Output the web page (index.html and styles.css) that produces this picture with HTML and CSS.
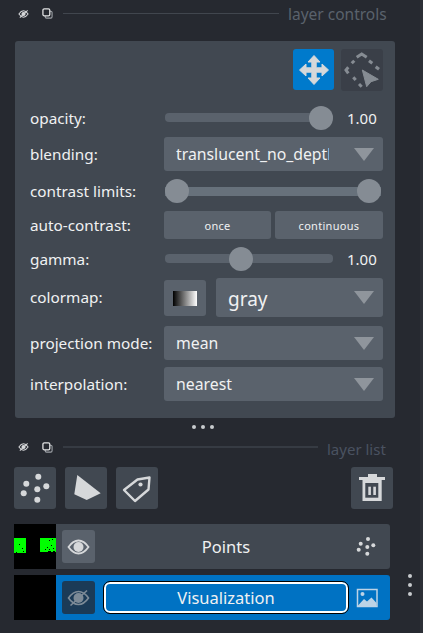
FILE: index.html
```html
<!DOCTYPE html>
<html lang="en">
<head>
<meta charset="utf-8">
<title>layer controls</title>
<link rel="stylesheet" href="styles.css">
</head>
<body>
<svg class="defs" width="0" height="0" aria-hidden="true">
  <defs>
    <symbol id="mini-eye" viewBox="0 0 12 10">
      <path d="M1 5C3 2 4.500 1.500 6 1.500S9 2 11 5C9 8 7.500 8.500 6 8.500S3 8 1 5Z" fill="none" stroke="#d6d8da" stroke-width="1.100"/>
      <circle cx="6" cy="5" r="2.300" fill="#d6d8da"/>
      <path d="M2 9 10.500 1" stroke="#d6d8da" stroke-width="1.100"/>
    </symbol>
    <symbol id="mini-copy" viewBox="0 0 12 12">
      <rect x="3.500" y="3.500" width="7.500" height="7.500" rx="1.500" fill="none" stroke="#9da1a6" stroke-width="1.200"/>
      <rect x="1" y="1" width="7.500" height="7.500" rx="1.500" fill="#262930" stroke="#e2e3e4" stroke-width="1.400"/>
    </symbol>
    <symbol id="arrow" viewBox="0 0 20 13"><path d="M0 0H20L10 13Z" fill="#8f959c"/></symbol>
  </defs>
</svg>
<main class="app">
  <header class="section-head">
    <svg class="mini-eye"><use href="#mini-eye"/></svg>
    <svg class="mini-copy"><use href="#mini-copy"/></svg>
    <span class="rule"></span>
    <span class="section-title">layer controls</span>
  </header>

  <section class="panel">
    <div class="modes">
      <button class="mode mode-on" type="button">
        <svg width="32" height="32" viewBox="0 0 32 32"><path d="M16 1.500 22 8H18.200V13.800H24V10L30.500 16 24 22V18.200H18.200V24H22L16 30.500 10 24H13.800V18.200H8V22L1.500 16 8 10V13.800H13.800V8H10Z" fill="#d6d8da" stroke="#d6d8da" stroke-width="1" stroke-linejoin="round"/></svg>
      </button>
      <button class="mode mode-off" type="button">
        <svg width="42" height="42" viewBox="0 0 42 42">
          <g fill="none" stroke="#868c93" stroke-width="3">
            <path d="M15.700 8.300 20.700 5 25.700 8.300"/>
            <path d="M10.700 14.300 13.300 11.700"/>
            <path d="M7.300 18.300 5 21 7.300 24.300"/>
            <path d="M12.300 28.300 14.700 31"/>
            <path d="M18 35 20.700 37.700"/>
            <path d="M28 11.700 31.300 14.300"/>
            <path d="M34.700 17.700 38 20.300"/>
          </g>
          <path d="M21.300 21 37.300 30.300 30 32.700 25.700 37.700Z" fill="#868c93" stroke="#868c93" stroke-width="1" stroke-linejoin="round"/>
        </svg>
      </button>
    </div>

    <div class="row row-slider">
      <label class="label">opacity:</label>
      <div class="slider"><div class="track"><span class="knob" style="left:156px"></span></div><span class="value">1.00</span></div>
    </div>
    <div class="row">
      <label class="label">blending:</label>
      <div class="select"><span class="select-text">translucent_no_depth</span><svg class="arrow"><use href="#arrow"/></svg></div>
    </div>
    <div class="row row-range">
      <label class="label">contrast limits:</label>
      <div class="track track-range"><span class="knob" style="left:12px"></span><span class="knob" style="left:204px"></span></div>
    </div>
    <div class="row row-auto">
      <label class="label">auto-contrast:</label>
      <div class="pair"><button class="small-btn" type="button">once</button><button class="small-btn" type="button">continuous</button></div>
    </div>
    <div class="row row-slider">
      <label class="label">gamma:</label>
      <div class="slider"><div class="track"><span class="knob" style="left:76px"></span></div><span class="value">1.00</span></div>
    </div>
    <div class="row row-cmap">
      <label class="label">colormap:</label>
      <div class="cmap">
        <span class="swatch-box"><span class="swatch"></span></span>
        <div class="select select-cmap"><span class="select-text cmap-text">gray</span><svg class="arrow"><use href="#arrow"/></svg></div>
      </div>
    </div>
    <div class="row row-proj">
      <label class="label">projection mode:</label>
      <div class="select"><span class="select-text">mean</span><svg class="arrow"><use href="#arrow"/></svg></div>
    </div>
    <div class="row">
      <label class="label">interpolation:</label>
      <div class="select"><span class="select-text">nearest</span><svg class="arrow"><use href="#arrow"/></svg></div>
    </div>
  </section>

  <div class="splitter"><span></span><span></span><span></span></div>

  <header class="section-head section-head-list">
    <svg class="mini-eye"><use href="#mini-eye"/></svg>
    <svg class="mini-copy"><use href="#mini-copy"/></svg>
    <span class="rule rule-list"></span>
    <span class="section-title section-title-list">layer list</span>
  </header>

  <div class="tools">
    <button class="tool" type="button">
      <svg width="42" height="42" viewBox="0 0 42 42" fill="#d6d8da"><circle cx="24.300" cy="9.700" r="3"/><circle cx="12.300" cy="16.700" r="3"/><circle cx="32.300" cy="19.300" r="3"/><circle cx="23.300" cy="22.300" r="3"/><circle cx="9.700" cy="26.300" r="3"/><circle cx="23.300" cy="32.700" r="3"/></svg>
    </button>
    <button class="tool" type="button">
      <svg width="42" height="42" viewBox="0 0 42 42"><path d="M12.300 8 35.700 26.300 21.700 33 9.300 27.300Z" fill="#d6d8da"/></svg>
    </button>
    <button class="tool" type="button">
      <svg width="42" height="42" viewBox="0 0 42 42"><path d="M8 23 21.500 12.500 33.500 10.500 32.500 22.500 19 34Z" fill="none" stroke="#d6d8da" stroke-width="2.400" stroke-linejoin="round"/><circle cx="24.500" cy="17.500" r="2.100" fill="#d6d8da"/></svg>
    </button>
    <button class="tool tool-trash" type="button">
      <svg width="42" height="42" viewBox="0 0 42 42"><path d="M17 7H26V10H34V13H8V10H17Z" fill="#d6d8da"/><path d="M11.500 13H30.700V34H11.500Z" fill="#d6d8da"/><rect x="14.300" y="16" width="13" height="14.700" fill="#414851"/><rect x="17.300" y="19.700" width="2.600" height="8.300" fill="#d6d8da"/><rect x="22.300" y="19.700" width="2.600" height="8.300" fill="#d6d8da"/></svg>
    </button>
  </div>

  <div class="layers-wrap">
    <ul class="layers">
      <li class="layer">
        <svg class="thumb" width="42" height="45" viewBox="0 0 42 45">
          <rect width="42" height="45" fill="#000"/>
          <rect x="0" y="14" width="12" height="15" fill="#00ff00"/>
          <rect x="26" y="14" width="16" height="14" fill="#00ff00"/>
          <path d="M5 20h1v1H5zM8 24h1v1H8zM2 28h1v1H2zM9 27h1v1H9zM35 16h1v1h-1zM38 15h1v1h-1zM33 23h1v1h-1zM37 21h1v1h-1zM31 25h1v1h-1zM35 25h1v1h-1zM39 24h1v1h-1zM34 27h3v1h-3zM39 27h2v1h-2z" fill="#000"/>
        </svg>
        <button class="vis" type="button">
          <svg width="23" height="16" viewBox="0 0 23 16"><path d="M1.500 8C5 3 8.500 1.500 11.500 1.500S18 3 21.500 8C18 13 14.500 14.500 11.500 14.500S5 13 1.500 8Z" fill="none" stroke="#d6d8da" stroke-width="1.800"/><circle cx="11.500" cy="8" r="5" fill="#d6d8da"/></svg>
        </button>
        <span class="layer-name">Points</span>
        <svg class="type-icon" width="22" height="22" viewBox="0 0 22 22" fill="#d6d8da"><circle cx="12" cy="3" r="2"/><circle cx="4.700" cy="7.700" r="2"/><circle cx="17.300" cy="9.300" r="2"/><circle cx="11.300" cy="11" r="2"/><circle cx="2.700" cy="13.700" r="2"/><circle cx="11.300" cy="17.700" r="2"/></svg>
      </li>
      <li class="layer layer-on">
        <span class="thumb thumb-black"></span>
        <button class="vis vis-off" type="button">
          <svg width="23" height="18" viewBox="0 0 23 18"><path d="M1.500 9C5 4 8.500 2.500 11.500 2.500S18 4 21.500 9C18 14 14.500 15.500 11.500 15.500S5 14 1.500 9Z" fill="none" stroke="#7d8b97" stroke-width="1.600"/><circle cx="11.500" cy="9" r="5" fill="#7d8b97"/><path d="M3.500 16.500 20 1.500" stroke="#7d8b97" stroke-width="1.600"/></svg>
        </button>
        <span class="layer-name layer-input">Visualization</span>
        <svg class="type-icon" width="22" height="20" viewBox="0 0 22 20"><rect x="1.500" y="1.500" width="19.500" height="17" fill="none" stroke="#bcd3e6" stroke-width="1.500"/><circle cx="6.500" cy="6" r="2" fill="#bcd3e6"/><path d="M2 17.500 8 11 11 13.500 15.500 9.500 20.500 15V18H2Z" fill="#bcd3e6"/></svg>
      </li>
    </ul>
    <div class="dock-handle"><span></span><span></span><span></span></div>
  </div>
</main>
</body>
</html>
```
FILE: styles.css
```css
* { box-sizing: border-box; }
html, body { margin: 0; padding: 0; height: 100%; }
body {
  background: #262930;
  color: #f0f1f2;
  font-family: "Noto Sans", "Open Sans", sans-serif;
  font-size: 15px;
  overflow: hidden;
  border-right: 3px solid #2d3037;
}
.defs { position: absolute; }
button { font-family: inherit; border: 0; padding: 0; margin: 0; }
.app { display: flex; flex-direction: column; width: 420px; }

.section-head { display: flex; align-items: center; height: 27px; margin-bottom: 14px; padding-left: 18px; }
.mini-eye { width: 11px; height: 10px; flex: none; }
.mini-copy { width: 11px; height: 11px; flex: none; margin-left: 13px; }
.rule { height: 1px; background: #41464e; width: 216px; margin-left: 10px; flex: none; }
.section-title { margin-left: 9px; font-size: 15.500px; color: #5a626c; line-height: 27px; padding-top: 1px; white-space: nowrap; }
.section-head-list { height: 22px; margin-bottom: 9px; }
.rule-list { width: 255px; height: 2px; background: #363b43; }
.section-title-list { color: #4a5260; font-size: 15px; line-height: 22px; padding-top: 3px; }

.panel {
  width: 380px;
  height: 377px;
  margin-left: 15px;
  padding: 8px 12px 0 15px;
  background: #414851;
  border-radius: 3px;
  display: flex;
  flex-direction: column;
  gap: 6px;
}
.modes { display: flex; justify-content: flex-end; gap: 7px; height: 42px; margin-bottom: 7px; }
.mode { width: 42px; height: 42px; border-radius: 3px; display: flex; align-items: center; justify-content: center; }
.mode-on { background: #007acc; width: 41px; height: 41px; }
.mode-off { background: #3a3f48; }

.row { display: grid; grid-template-columns: 134px minmax(0, 1fr); align-items: center; height: 34px; }
.row-slider { height: 27px; }
.row-range, .row-auto { height: 28px; }
.row-cmap { height: 42px; align-items: start; }
.row-cmap .label { line-height: 39px; }
.row-proj { height: 35px; align-items: start; }
.row-proj .label, .row-proj .select { height: 34px; line-height: 34px; }
.label { font-size: 15.300px; white-space: nowrap; color: #f0f1f2; }

.slider { display: flex; align-items: center; }
.track { position: relative; width: 168px; height: 9px; margin-left: 1px; border-radius: 4px; background: #5a626c; flex: none; }
.track-range { width: 216px; background: #67717b; border-radius: 0; }
.knob { position: absolute; top: 50%; width: 24px; height: 24px; margin: -12px 0 0 -12px; border-radius: 50%; background: #858c94; }
.value { margin-left: 14px; font-size: 15px; color: #f0f1f2; }

.select { display: flex; align-items: center; justify-content: space-between; height: 34px; padding: 0 9px 0 12px; background: #5a626c; border-radius: 3px; }
.select-text { display: block; flex: 1; max-width: 153px; overflow: hidden; white-space: nowrap; font-size: 15.800px; }
.arrow { width: 20px; height: 13px; flex: none; }
.cmap { display: flex; gap: 10px; height: 39px; }
.swatch-box { width: 42px; height: 36px; margin-top: 2px; display: flex; align-items: center; justify-content: center; background: #5a626c; border-radius: 3px; flex: none; }
.swatch { display: block; width: 24px; height: 15px; background: linear-gradient(90deg, #000, #fff); }
.select-cmap { flex: 1; min-width: 0; height: 39px; padding-left: 12px; }
.cmap-text { font-size: 19px; padding-top: 2px; }
.pair { display: grid; grid-template-columns: 107px 108px; gap: 4px; height: 28px; }
.small-btn { background: #5a626c; color: #f0f1f2; font-size: 11px; letter-spacing: 0.300px; border-radius: 3px; }

.splitter { display: flex; justify-content: center; gap: 5px; height: 18px; align-items: center; width: 406px; }
.splitter span, .dock-handle span { display: block; width: 4px; height: 4px; border-radius: 50%; background: #c8cbce; }

.tools { display: flex; gap: 9px; padding-left: 14px; width: 393px; }
.tool { width: 42px; height: 42px; background: #414851; border-radius: 3px; display: block; }
.tool svg { display: block; }
.tool-trash { margin-left: auto; }

.layers-wrap { display: flex; margin-top: 15px; padding-left: 14px; }
.layers { list-style: none; margin: 0; padding: 0; width: 376px; display: flex; flex-direction: column; gap: 6px; }
.layer { display: flex; align-items: center; height: 45px; background: #414851; border-radius: 0 3px 3px 0; }
.layer-on { background: #0072c3; }
.thumb { display: block; width: 42px; height: 45px; flex: none; }
.thumb-black { background: #000; }
.vis { width: 33px; height: 33px; margin-left: 6px; border-radius: 3px; background: #5a626c; display: flex; align-items: center; justify-content: center; flex: none; }
.vis-off { background: #1b3b57; }
.layer-name { flex: 1; margin: 0 8px 0 9px; height: 31px; line-height: 31px; text-align: center; font-size: 16.500px; white-space: nowrap; }
.layer-input { background: #0072c3; border: 2px solid #fff; border-radius: 6px; outline: 1px solid #000; line-height: 27px; }
.type-icon { flex: none; margin-right: 12px; display: block; }
.dock-handle { display: flex; flex-direction: column; gap: 5px; margin: 50px 0 0 18px; }
```
